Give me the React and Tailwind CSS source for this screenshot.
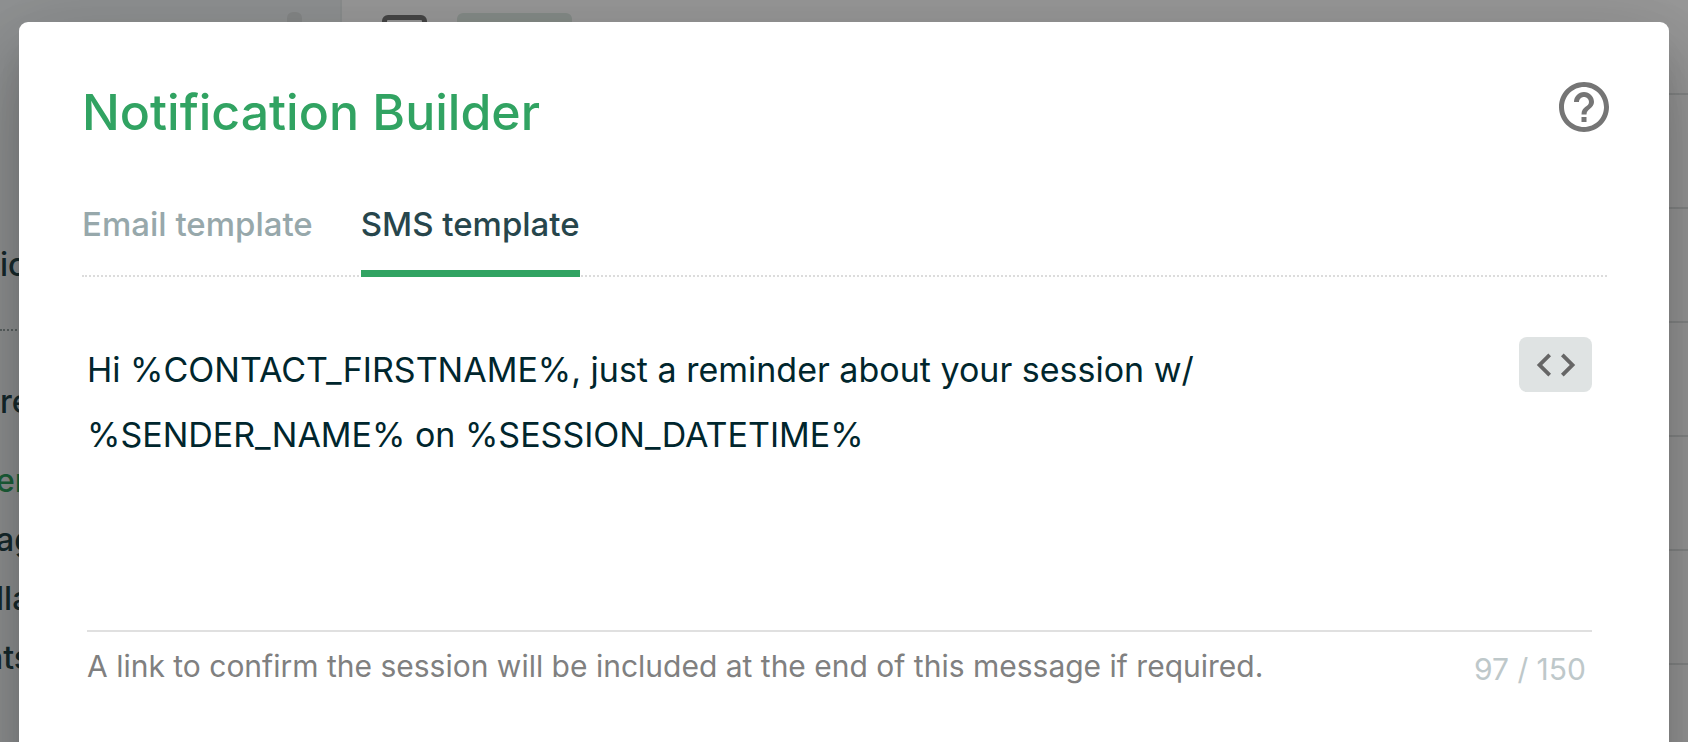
import { useState } from "react";
import { MdCode, MdHelpOutline } from "react-icons/md";

const INITIAL_MESSAGE =
  "Hi %CONTACT_FIRSTNAME%, just a reminder about your session w/ %SENDER_NAME% on %SESSION_DATETIME%";

function Sidebar() {
  return (
    <aside className="w-[342px] shrink-0 border-r-2 border-[#eaeeee] bg-[#f0f4f6] text-[32px] leading-[59px] font-medium text-[#27464c]">
      <div className="flex h-[235px] justify-end pt-3 pr-[38px]">
        <span className="h-8 w-[15px] rounded-md bg-[#dfe3e3]" />
      </div>
      <div className="h-24 border-b-2 border-dotted border-[#9aa5a6]">ic</div>
      <nav className="flex flex-col pt-[41px]">
        <span className="mb-5">re</span>
        <span className="-ml-1 text-[#31a362]">er</span>
        <span className="-ml-1">ag</span>
        <span className="-ml-1">lla</span>
        <span className="-ml-4">nts</span>
      </nav>
    </aside>
  );
}

function Page() {
  return (
    <div className="flex-1 bg-white">
      <div className="flex h-[95px] gap-[30px] border-b-2 border-[#dfe3e3] pt-[13px] pl-10">
        <span className="mt-0.5 h-[45px] w-[45px] rounded-md border-[5px] border-[#757575]" />
        <span className="h-[50px] w-[115px] rounded-md bg-[#e0ebe5]" />
      </div>
      {[1, 2, 3, 4, 5, 6].map((row) => (
        <div key={row} className="h-[114px] border-b-2 border-[#dfe3e3]" />
      ))}
    </div>
  );
}

function Tab({ active, onClick, children }) {
  return (
    <button
      type="button"
      role="tab"
      aria-selected={active}
      onClick={onClick}
      className={
        active
          ? "h-[77px] border-b-[7px] border-[#31a362] pb-[22px] text-[#27464c]"
          : "h-[77px] border-b-[7px] border-transparent pb-[22px] text-[#97a8ab]"
      }
    >
      {children}
    </button>
  );
}

export default function App() {
  const [tab, setTab] = useState("sms");
  const [message, setMessage] = useState(INITIAL_MESSAGE);

  return (
    <div className="relative h-screen overflow-hidden font-['Inter',sans-serif]">
      <div className="flex h-full overflow-hidden" aria-hidden="true">
        <Sidebar />
        <Page />
      </div>
      <div className="absolute inset-0 overflow-hidden bg-black/40 px-[19px] pt-[22px]">
        <section
          role="dialog"
          aria-labelledby="dialog-title"
          className="min-h-[900px] rounded-[9px] bg-white px-[62px] pt-[60px] shadow-[0_22px_30px_-14px_rgba(0,0,0,0.2),0_48px_76px_6px_rgba(0,0,0,0.14),0_18px_92px_16px_rgba(0,0,0,0.12)]"
        >
          <header className="flex h-[118px] items-start justify-between">
            <h1 id="dialog-title" className="pl-px text-[50px] leading-[60px] font-medium text-[#31a362]">
              Notification Builder
            </h1>
            <button type="button" aria-label="Help" className="-mt-[5px] -mr-[7px] text-[#757575]">
              <MdHelpOutline size={60} />
            </button>
          </header>
          <div
            role="tablist"
            className="ml-px flex h-[77px] gap-12 border-b-2 border-dotted border-[#dcdcdc] text-[33px] leading-10 font-medium"
          >
            <Tab active={tab === "email"} onClick={() => setTab("email")}>
              Email template
            </Tab>
            <Tab active={tab === "sms"} onClick={() => setTab("sms")}>
              SMS template
            </Tab>
          </div>
          <div className="mr-[15px] ml-[6px] pt-[60px]">
            <div className="flex items-start gap-10 border-b-2 border-[#e0e0e0]">
              <textarea
                aria-label="SMS message"
                value={message}
                onChange={(e) => setMessage(e.target.value)}
                className="h-[293px] flex-1 resize-none text-[34px] leading-[65px] text-[#00262d] outline-none"
              />
              <button
                type="button"
                aria-label="Insert variable"
                className="flex h-[55px] w-[73px] items-center justify-center rounded-lg bg-[#dfe3e3] text-[#666666]"
              >
                <MdCode size={46} />
              </button>
            </div>
            <div className="flex justify-between pt-[14px] pr-[6px] text-[30px] leading-10">
              <p className="text-[#808080]">
                A link to confirm the session will be included at the end of this message if required.
              </p>
              <span className="pt-[3px] text-[#bec8ca]">{message.length} / 150</span>
            </div>
          </div>
        </section>
      </div>
    </div>
  );
}
